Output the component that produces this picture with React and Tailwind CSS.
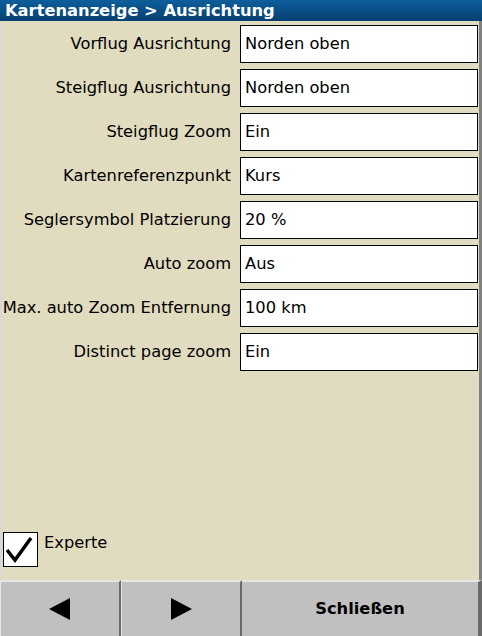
const rows = [
  ["Vorflug Ausrichtung", "Norden oben"],
  ["Steigflug Ausrichtung", "Norden oben"],
  ["Steigflug Zoom", "Ein"],
  ["Kartenreferenzpunkt", "Kurs"],
  ["Seglersymbol Platzierung", "20 %"],
  ["Auto zoom", "Aus"],
  ["Max. auto Zoom Entfernung", "100 km"],
  ["Distinct page zoom", "Ein"],
];

function NavButton({ children, last }) {
  return (
    <div
      className={`flex items-center justify-center h-full bg-[#c0c0c0] border-t-2 border-t-[#e6e6e6] ${
        last ? "flex-1 border-r-4 border-r-[#6b6b6b]" : "w-[121px] border-r-2 border-r-[#6b6b6b] border-l border-l-[#e6e6e6]"
      }`}
    >
      {children}
    </div>
  );
}

export default function App() {
  return (
    <div
      className="w-[482px] h-[636px] flex flex-col bg-[#e1dcbf] text-black"
      style={{ fontFamily: '"DejaVu Sans", sans-serif' }}
    >
      {/* title */}
      <div className="h-[21px] shrink-0 bg-gradient-to-b from-[#0d5f9c] to-[#063f70] text-white font-bold text-[16.3px] leading-[21px] pl-[5px]">
        Kartenanzeige &gt; Ausrichtung
      </div>

      {/* body */}
      <div className="flex-1 flex flex-col border-l-2 border-l-[#d8d8d8] border-r-[3px] border-r-[#808080]">
        <div className="flex flex-col gap-[6px] pt-[4px]">
          {rows.map(([label, value], key) => (
            <div className="flex items-center h-[38px]" key={key}>
              <div className="w-[230px] text-right text-[16.3px] pr-[1px] whitespace-nowrap">
                {label}
              </div>
              <div className="ml-[8px] mr-[1px] flex-1 h-full bg-white border border-black flex items-center pl-[4px] text-[16.3px]">
                {value}
              </div>
            </div>
          ))}
        </div>

        <div className="flex-1" />

        <div className="flex items-center gap-[6px] pl-[1px] pb-[13px]">
          <div className="w-[35px] h-[35px] bg-white border border-black flex items-center justify-center">
            <svg width="33" height="33" viewBox="0 0 33 33">
              <path d="M3 17 L11 27 L27 5" fill="none" stroke="black" strokeWidth="3.5" />
            </svg>
          </div>
          <span className="text-[16.3px] -mt-[12px]">Experte</span>
        </div>
      </div>

      {/* bottom buttons */}
      <div className="h-[56px] shrink-0 flex">
        <NavButton>
          <svg width="22" height="24" viewBox="0 0 22 24">
            <polygon points="0,12 21,1 21,23" fill="black" />
          </svg>
        </NavButton>
        <NavButton>
          <svg width="22" height="24" viewBox="0 0 22 24">
            <polygon points="22,12 1,1 1,23" fill="black" />
          </svg>
        </NavButton>
        <NavButton last>
          <span className="font-bold text-[16.3px]">Schließen</span>
        </NavButton>
      </div>
    </div>
  );
}
